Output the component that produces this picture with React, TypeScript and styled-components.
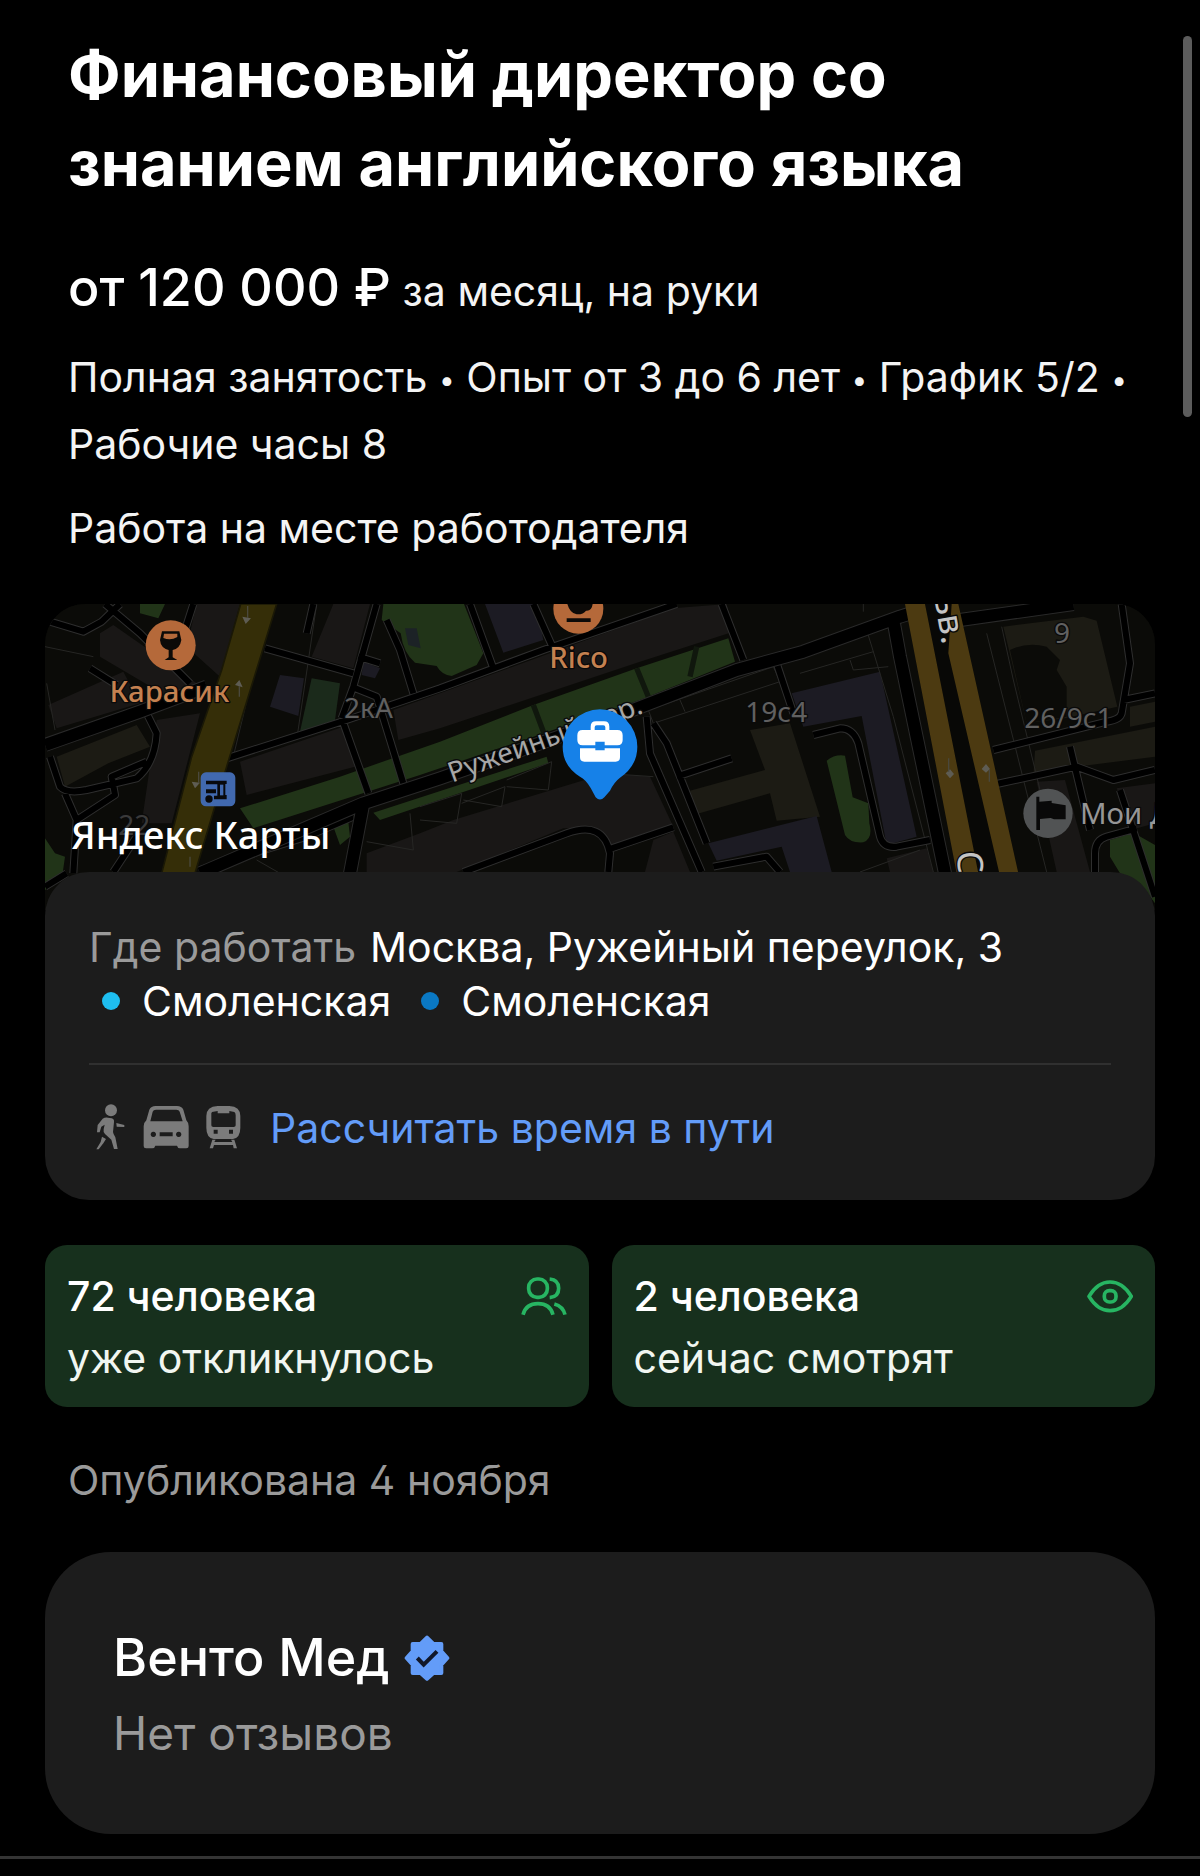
import React from "react";
import styled, { createGlobalStyle, css } from "styled-components";

const GlobalStyle = createGlobalStyle`
  *, *::before, *::after { box-sizing: border-box; }
  body {
    margin: 0;
    background: #000;
    color: #f4f4f4;
    font-family: Inter, "Liberation Sans", sans-serif;
    font-feature-settings: "cv02";
  }
  h1, h2, p, dl, dd, dt, ul { margin: 0; padding: 0; font: inherit; }
  a { text-decoration: none; }
  svg { display: block; flex: none; }
`;

const Page = styled.main`
  position: relative;
  display: flex;
  flex-direction: column;
  padding: 18px 45px 0;
`;

const ScrollThumb = styled.div`
  position: absolute;
  top: 36px;
  right: 8px;
  width: 9px;
  height: 381px;
  border-radius: 5px;
  background: #5c5c5c;
`;

const Summary = styled.header`
  display: flex;
  flex-direction: column;
  padding: 12px 23px 0;
`;

const Title = styled.h1`
  && {
    font-size: 63px;
    font-weight: 700;
    line-height: 89px;
    color: #fff;
  }
`;

const Salary = styled.p`
  && {
    margin-top: 44px;
    font-size: 41px;
    line-height: 72px;
  }
`;

const Amount = styled.strong`
  font-size: 52px;
  font-weight: 500;
  color: #fff;
`;

const bodyText = css`
  font-size: 41px;
  line-height: 67px;
`;

const Facts = styled.p`
  && {
    ${bodyText}
    margin-top: 17px;
  }
`;

const Dot = styled.span`
  font-size: 28px;
  line-height: 28px;
  vertical-align: 2px;
`;

const MapLink = styled.a`
  position: relative;
  display: block;
  height: 306px;
  margin-top: 42px;
  overflow: hidden;
  border-radius: 40px 40px 0 0;
  background: #0a0b08;

  > svg {
    width: 100%;
    height: 100%;
  }
`;

const MapBrand = styled.span`
  position: absolute;
  left: 26px;
  top: 204px;
  font-family: "Noto Sans", sans-serif;
  font-size: 38px;
  font-weight: 500;
  line-height: 52px;
  color: #fff;
`;

const AddressCard = styled.section`
  position: relative;
  margin-top: -38px;
  padding: 48px 44px 45px;
  border-radius: 44px;
  background: #1c1c1c;
`;

const Address = styled.dl`
  display: flex;
  flex-wrap: wrap;
  column-gap: 14px;
  font-size: 41px;
  line-height: 54px;
  color: #fff;

  dt { color: #9a9a9a; }
`;

const Stations = styled.ul`
  && {
    display: flex;
    flex-wrap: wrap;
    column-gap: 30px;
    padding-left: 13px;
    list-style: none;
    font-size: 41px;
    line-height: 54px;
    color: #fff;
  }
`;

const Station = styled.li<{ $line: string }>`
  display: flex;
  align-items: center;
  gap: 22px;

  &::before {
    content: "";
    width: 18px;
    height: 18px;
    border-radius: 50%;
    background: ${(p) => p.$line};
  }
`;

const Rule = styled.hr<{ $full?: boolean }>`
  width: auto;
  height: ${(p) => (p.$full ? 3 : 2)}px;
  margin: ${(p) => (p.$full ? "22px -45px 0" : "35px 0 36px")};
  border: 0;
  background: ${(p) => (p.$full ? "#343434" : "#303030")};
`;

const RouteLink = styled.a`
  display: flex;
  align-items: center;
  gap: 22px;
  font-size: 41px;
  line-height: 54px;
  color: #639cf8;
`;

const Transport = styled.span`
  display: flex;
  padding-left: 3px;
  color: #7b7b7b;
`;

const Stats = styled.section`
  display: grid;
  grid-template-columns: 1fr 1fr;
  gap: 23px;
  margin-top: 45px;
`;

const Stat = styled.div`
  display: flex;
  align-items: flex-start;
  justify-content: space-between;
  padding: 20px 22px 18px;
  border-radius: 22px;
  background: #17301d;
  font-size: 41px;
  line-height: 62px;
  color: #f1f6f1;

  strong { font-weight: 500; color: #fff; }
  svg { margin-top: 8px; color: #27b562; }
`;

const Published = styled.p`
  && {
    ${bodyText}
    margin: 40px 0 38px;
    padding-left: 23px;
    color: #9a9a9a;
  }
`;

const Company = styled.section`
  padding: 68px;
  border-radius: 66px;
  background: #1c1c1c;
`;

const CompanyName = styled.h2`
  && {
    display: flex;
    align-items: center;
    gap: 14px;
    font-size: 52px;
    font-weight: 500;
    line-height: 76px;
    color: #fff;
  }
`;

const Reviews = styled.p`
  && {
    margin-top: 4px;
    font-size: 46px;
    line-height: 66px;
    color: #9a9a9a;
  }
`;

const Walk = () => (
  <svg width="46" height="54" viewBox="40 65 138 162" fill="currentColor" aria-hidden="true">
    <circle cx="97" cy="93" r="18" />
    <path d="M72 118 Q78 114 88 115 L99 117 Q107 119 106 128 L103 158 Q104 165 110 174 L117 209 H106 L98 181 L79 164 Q73 158 75 149 L78 136 L68 142 L63 159 H55 L57 137Z" />
    <path d="M70 172 L82 179 L74 192 L60 210 H53 L66 188Z" />
    <path d="M113 131 L137 137 V143 L114 142Z" />
  </svg>
);

const Car = () => (
  <svg width="62" height="54" viewBox="178 65 186 162" aria-hidden="true">
    <path fill="currentColor" fillRule="evenodd" d="M231 80 H295 Q309 80 314 91 L323 123 Q330 130 330 141 V200 Q330 207 323 207 H304 Q297 207 295 199 H230 Q228 207 221 207 H202 Q195 207 195 200 V141 Q195 130 203 123 L212 91 Q217 80 231 80Z M232 91 Q224 91 222 97 L215 126 H312 L303 97 Q301 91 293 91Z M224 157 a8 8 0 1 0 .1 0Z M300 157 a8 8 0 1 0 .1 0Z M243 159 V171 H282 V159Z" />
  </svg>
);

const Train = () => (
  <svg width="48" height="54" viewBox="360 65 144 162" aria-hidden="true">
    <path fill="currentColor" fillRule="evenodd" d="M413 80 H448 Q481 82 481 110 V145 Q481 175 459 179 H401 Q379 175 379 145 V110 Q379 82 413 80Z M396 98 Q393 101 394 108 V138 Q394 143 400 143 H461 Q467 143 467 138 V108 Q467 101 463 98 L448 95 V102 H413 V95Z M401 151 V163 H413 V151Z M447 151 V163 H459 V151Z" />
    <path fill="currentColor" d="M397 181 H407 L403 188 H457 L453 181 H463 L471 207 H461 L459 197 H402 L399 207 H389Z" />
  </svg>
);

const People = () => (
  <svg width="46" height="46" viewBox="64 98 138 138" fill="none" stroke="currentColor" strokeWidth="11" aria-hidden="true">
    <rect x="87" y="116" width="56" height="55" rx="25" />
    <path d="M150 116 Q177 118 177 144 Q177 170 150 172" />
    <path d="M70 223 Q79 190 115 190 Q151 190 160 223" />
    <path d="M164 191 Q190 198 196 223" />
  </svg>
);

const Eye = () => (
  <svg width="46" height="46" viewBox="52 98 138 138" fill="none" stroke="currentColor" strokeWidth="11" aria-hidden="true">
    <path d="M58 168 Q84 125 121 125 Q159 125 185 168 Q159 211 121 211 Q84 211 58 168Z" strokeLinejoin="round" />
    <rect x="104" y="151" width="35" height="34" rx="15" />
  </svg>
);

const Verified = () => (
  <svg width="46" height="46" viewBox="28 38 138 138" aria-label="Проверенная компания" role="img">
    <path
      fill="#639cf8"
      stroke="#639cf8"
      strokeWidth="12"
      strokeLinejoin="round"
      d="M97 46 L116 65 H140 V87 L158 107 L140 127 V152 H116 L97 169 L78 152 H54 V127 L36 107 L54 87 V65 H78Z"
    />
    <path d="M68 107 L87 127 L127 87" fill="none" stroke="#11182a" strokeWidth="12" />
  </svg>
);

const PARKS = [
  "M300 42 H375 L355 85 L300 70Z",
  "M1030 42 H1272 L1330 190 L1310 225 L1235 258 Q1205 255 1190 228 L1125 218 Q1090 190 1082 130 L1025 90Z",
  "M15 745 L45 790 L75 800 L65 870 L15 900Z",
  "M600 655 L900 560 L1200 455 L1480 345 L1790 235 L2065 145 L2085 215 L1800 330 L1480 440 L1140 555 L640 715Z",
  "M1000 668 L1240 590 L1520 500 L1525 520 L1020 690Z",
  "M880 710 L925 695 L930 740 L900 765Z",
  "M2360 512 Q2385 492 2415 497 L2438 622 L2485 640 L2488 700 Q2500 745 2470 757 Q2430 760 2415 735Z",
  "M3210 750 L3280 728 L3345 765 V940 L3300 880 L3240 850 L3210 800Z",
];

const HOUSES = [
  "M180 130 L220 105 L470 280 L400 330 L180 200Z",
  "M25 345 L250 245 L300 340 L50 415Z",
  "M470 42 H600 L540 260 L440 170Z",
  "M350 390 L480 370 L395 700 L305 700Z",
  "M880 42 H990 L940 235 L815 200Z",
  "M600 515 L925 405 L965 525 L620 615Z",
  "M1060 360 L1200 310 L1900 55 L2060 42 L2080 125 L1800 215 L1200 415 L1075 450Z",
  "M980 790 L1140 730 L1240 690 L1700 550 L1830 560 L1900 710 L1715 775 L1640 715 L1570 715 L1250 846 H980Z",
  "M1840 750 L1900 725 L1950 846 H1815Z",
  "M3230 595 L3345 580 V700 L3280 718Z",
  "M2540 805 L2660 775 L2680 846 H2550Z",
  "M2990 575 L3075 570 L3150 846 H3050Z",
];

const OLIVE = [
  "M50 500 L290 405 L330 470 L205 520 L75 590Z",
  "M2130 420 L2250 400 L2340 680 L2210 692 L2190 610 L1970 672 L1950 602 L2175 540Z",
  "M2890 110 L3130 80 L3170 92 L3232 350 L3075 385 L2960 400 Z",
  "M2985 482 L3345 410 V500 L3110 530 L2980 560Z",
  "M3270 350 L3345 335 V395 L3270 410Z",
];

const VIOLET = [
  "M720 255 L792 265 L775 378 L690 350Z",
  "M970 215 L1020 235 L1005 265 L965 255Z",
  "M1335 42 H1490 L1510 150 L1390 188Z",
  "M2255 310 L2520 245 L2630 740 L2540 765 L2465 378 L2290 410Z",
  "M2005 760 L2330 678 L2375 846 H2250 L2225 770 L2030 812Z",
];

const STREETS = [
  "M195 42 L300 130 L450 280",
  "M15 90 L130 125 L185 95 L240 42",
  "M150 235 L230 285",
  "M460 42 L435 120",
  "M675 175 L940 250",
  "M820 42 L800 130",
  "M1010 42 L940 290 L905 385",
  "M1040 90 L1080 180 L1120 310",
  "M955 200 L1020 220",
  "M935 290 L1010 320 L1090 580",
  "M560 505 L920 390 L1200 295 L1510 180 L1910 42",
  "M905 385 L985 610",
  "M1290 42 L1360 235",
  "M1480 42 L1535 165",
  "M2045 42 L2110 210",
  "M30 500 L60 590 Q80 612 140 600 L290 565 Q345 520 350 430 L320 370",
  "M320 515 L215 560 L225 615 L110 690 L75 610 M110 690 L100 850",
  "M15 890 L80 850",
  "M290 740 L220 846",
  "M480 840 L800 740 L940 680",
  "M1270 846 L1580 730 Q1690 690 1710 790 L1705 846",
  "M1715 775 L1900 712",
  "M1820 380 L1830 490 L1985 846",
  "M1840 400 L1880 460 L2000 760",
  "M1910 560 L2075 505",
  "M2210 220 L2260 370",
  "M2020 830 L2180 800 L2220 846",
  "M2320 435 L2400 415 Q2440 415 2455 460 L2520 740 Q2530 775 2570 770 L2670 750",
  "M3245 42 L3270 220 L3245 370 Q3240 390 3200 395 L2860 480",
  "M3250 330 L3345 310",
  "M2870 582 L3110 530 L3220 570 L3345 540",
  "M3090 470 L3150 720",
  "M3165 846 V790 Q3165 750 3200 740 L3290 715",
  "M3240 600 L3345 920",
];

const OUTLINES = [
  "M15 170 L160 200 M20 280 L45 420",
  "M1140 650 L1265 610 L1250 700 L1140 690",
  "M1265 640 L1395 590 L1385 650 L1270 630",
  "M1400 570 L1535 515 L1525 600 L1400 590 M1620 545 L1840 560",
  "M1110 670 L1120 780 L980 755",
  "M690 42 L580 500 M830 42 L770 450 M650 810 L720 850",
  "M1825 360 L2200 230 L2220 275 L1840 400Z M1920 330 L1935 365",
  "M2280 250 L2500 185 M2430 210 L2440 240 L2545 230 M2470 42 V65 M2460 846 L2640 780",
  "M2840 130 L3020 846 M2885 110 L2920 270 L3000 600",
  "M2480 120 L2560 380 L2680 846",
];

const AVENUES =
  "M15 465 L300 365 L500 290 M480 850 L970 640 L1200 565 L1700 390 L2090 240 L2290 185 L2580 80 L2700 42 M2760 90 L3100 42 M970 640 L930 850 M2560 90 L2580 200 L2715 850";

const CityMap = () => (
  <svg viewBox="15 42 3330 918" preserveAspectRatio="xMidYMin slice" aria-hidden="true">
    <rect x="15" y="42" width="3330" height="918" fill="#0b0b08" />
    <path d={HOUSES.join(" ")} fill="#191716" />
    <path d={OLIVE.join(" ")} fill="#1c1b14" />
    <path d={VIOLET.join(" ")} fill="#1c1b23" />
    <path d={PARKS.join(" ")} fill="#213418" />
    <path d="M1095 115 L1130 115 L1142 175 L1105 165Z" fill="#1c2226" />
    <path d="M815 265 L900 280 L885 390 L780 425Z" fill="#1b2a1b" />
    <path d="M2910 180 Q2960 155 3020 170 L3060 210 L3050 240 L3080 290 L3080 380 L2960 400Z" fill="#0b0b08" />
    <path d="M1480 345 L1512 430 M1790 235 L1825 320 M1970 170 L1950 260" stroke="#10170d" strokeWidth="16" />

    <path d={OUTLINES.join(" ")} fill="none" stroke="#262624" strokeWidth="3" />
    <g fill="none" strokeLinejoin="round">
      <path d={STREETS.join(" ")} stroke="#2e2e2e" strokeWidth="24" />
      <path d={STREETS.join(" ")} stroke="#000" strokeWidth="18" />
      <path d={AVENUES} stroke="#292929" strokeWidth="42" />
      <path d={AVENUES} stroke="#000" strokeWidth="36" />
    </g>

    <path d="M602 42 H710 L665 190 L560 530 L465 850 H365 L455 500 L545 240Z" fill="#352e08" stroke="#1a1806" strokeWidth="5" />
    <path d="M2655 42 H2735 L2885 850 H2800Z" fill="#080806" />
    <path d="M2595 42 H2655 L2815 850 H2750Z M2735 42 H2755 L2935 850 H2878 L2725 190Z" fill="#4c3a11" />
    <g fill="#5e5c53">
      <path d="M607 80 L633 85 L617 102Z M585 285 L598 270 L608 292Z M455 575 L480 578 L465 595Z" />
      <path d="M2717 550 L2730 538 L2742 552 L2730 565Z M2825 537 L2838 522 L2850 537 L2838 548Z" />
    </g>
    <path d="M623 48 V84 M598 288 V320 M476 545 V580 M450 800 V830 M2726 505 V545 M2848 540 V575" stroke="#4a483c" strokeWidth="4" />

    <g fontFamily="Noto Sans, sans-serif" fontSize="84" stroke="#0a0a0a" strokeWidth="8" paintOrder="stroke" strokeLinejoin="round">
      <g fill="#606060">
        <text x="912" y="385">2кА</text>
        <text x="235" y="735" fill="#3a3a3a">22</text>
        <text x="2116" y="397">19с4</text>
        <text x="3042" y="158">9</text>
        <text x="2953" y="415">26/9с1</text>
      </g>
      <g fill="#c48150" fontSize="88" fontWeight="500">
        <text x="388" y="335" textAnchor="middle">Карасик</text>
        <text x="1616" y="233" textAnchor="middle">Rico</text>
      </g>
      <g fill="#a6a6a6">
        <text transform="translate(1236 578) rotate(-20)">Ружейный пер.</text>
        <text x="3120" y="703" fill="#969696" fontSize="88">Мои Д</text>
        <g fill="#c4c4c4" fontSize="106">
          <text transform="translate(2682 22) rotate(80)">ьв.</text>
          <text transform="translate(2752 784) rotate(88)">С</text>
        </g>
      </g>
    </g>

    <circle cx="392" cy="166" r="75" fill="#b5693a" />
    <path d="M366 124 H418 L424 150 Q420 176 398 180 V202 L412 210 H374 L386 202 V180 Q362 174 360 150Z" fill="#0c0a08" />
    <path d="M372 131 H412 V141 Q392 153 370 144Z" fill="#b5693a" />
    <circle cx="1615" cy="56" r="75" fill="#b5693a" />
    <path d="M1582 42 H1658 Q1655 64 1638 62 Q1630 74 1610 73 Q1590 70 1582 42Z M1580 85 H1652 V96 H1580Z" fill="#0c0a08" />

    <rect x="482" y="547" width="104" height="102" rx="16" fill="#4169af" />
    <path d="M498 572 H560 V582 H556 V615 H560 V628 H522 V617 H532 V583 H498Z M498 598 H528 V610 H498Z" fill="#08090d" />
    <path d="M540 584 H550 V616 H540Z" fill="#4169af" />
    <circle cx="507" cy="627" r="11" fill="#08090d" />

    <circle cx="3024" cy="670" r="74" fill="#515354" />
    <path d="M2989 620 H2998 V635 L3035 632 V639 L3077 646 V688 H3042 L3032 684 L3000 687 V720 H2989Z" fill="#090909" />

    <path d="M1680 358 A112 112 0 0 1 1792 470 Q1792 528 1739 564 Q1723 576 1710 602 L1693 622 Q1680 635 1667 622 L1652 594 Q1637 568 1620 560 Q1568 528 1568 470 A112 112 0 0 1 1680 358Z" fill="#1681e8" />
    <path fill="#fff" fillRule="evenodd" d="M1652 420 V410 Q1652 394 1668 394 H1692 Q1708 394 1708 410 V420 H1732 Q1748 420 1748 436 V450 Q1748 466 1732 466 H1694 V455 H1666 V466 H1628 Q1612 466 1612 450 V436 Q1612 420 1628 420Z M1664 420 H1696 V412 Q1696 406 1690 406 H1670 Q1664 406 1664 412Z M1620 475 H1666 V481 H1694 V475 H1740 V502 Q1740 515 1727 515 H1633 Q1620 515 1620 502Z" />
  </svg>
);

const STATIONS = [
  { name: "Смоленская", line: "#1ebef0" },
  { name: "Смоленская", line: "#0a78c3" },
];

const STATS = [
  { count: "72 человека", note: "уже откликнулось", icon: <People /> },
  { count: "2 человека", note: "сейчас смотрят", icon: <Eye /> },
];

const FACTS = ["Полная занятость", "Опыт от 3 до 6 лет", "График 5/2", "Рабочие часы 8"];

export default function App() {
  return (
    <>
      <GlobalStyle />
      <Page>
        <ScrollThumb />
        <Summary>
          <Title>Финансовый директор со знанием английского языка</Title>
          <Salary>
            <Amount>от 120 000 ₽</Amount> за месяц, на руки
          </Salary>
          <Facts>
            {FACTS.map((fact, i) => (
              <React.Fragment key={fact}>
                {i > 0 && (
                  <>
                    {" "}
                    <Dot>•</Dot>{" "}
                  </>
                )}
                {fact}
              </React.Fragment>
            ))}
          </Facts>
          <Facts>Работа на месте работодателя</Facts>
        </Summary>

        <MapLink href="#map" aria-label="Показать на карте">
          <CityMap />
          <MapBrand>Яндекс Карты</MapBrand>
        </MapLink>
        <AddressCard>
          <Address>
            <dt>Где работать</dt>
            <dd>Москва, Ружейный переулок, 3</dd>
          </Address>
          <Stations>
            {STATIONS.map((s) => (
              <Station key={s.line} $line={s.line}>
                {s.name}
              </Station>
            ))}
          </Stations>
          <Rule />
          <RouteLink href="#route">
            <Transport>
              <Walk />
              <Car />
              <Train />
            </Transport>
            Рассчитать время в пути
          </RouteLink>
        </AddressCard>

        <Stats>
          {STATS.map((s) => (
            <Stat key={s.count}>
              <div>
                <strong>{s.count}</strong>
                <p>{s.note}</p>
              </div>
              {s.icon}
            </Stat>
          ))}
        </Stats>

        <Published>Опубликована 4 ноября</Published>

        <Company>
          <CompanyName>
            Венто Мед
            <Verified />
          </CompanyName>
          <Reviews>Нет отзывов</Reviews>
        </Company>
        <Rule $full />
      </Page>
    </>
  );
}
